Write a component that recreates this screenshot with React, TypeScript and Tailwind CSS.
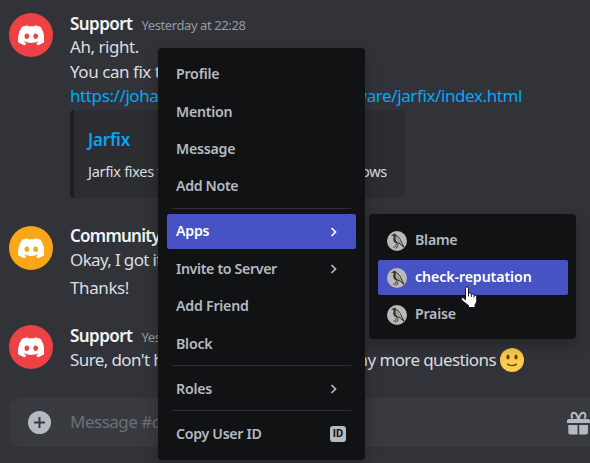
import type { ReactNode } from "react";
import { SiDiscord } from "react-icons/si";

function Avatar({ color }: { color: string }) {
  return (
    <div className={`flex size-11 shrink-0 items-center justify-center rounded-full text-white ${color}`}>
      <SiDiscord size={26.500} />
    </div>
  );
}

function Author({ name, tracking, time }: { name: string; tracking: string; time?: string }) {
  return (
    <div className="flex h-6 items-baseline gap-[9px] pt-px">
      <span className={`font-semibold text-[#f2f3f5] ${tracking}`}>{name}</span>
      {time && <span className="text-[13px] tracking-[-0.400px] text-[#949ba4]">{time}</span>}
    </div>
  );
}

function BirdIcon() {
  return (
    <svg viewBox="0 0 20 20" className="size-5 shrink-0">
      <circle cx="10" cy="10" r="10" fill="#bab9b7" />
      <path d="M3.800 4.600 6 3.500C7.200 2.200 9 2.700 9.300 4.300c2.400 1.200 4.300 3.500 5.300 6.200l3 5.800-.8.400-4.200-3.800C9 13.200 6.500 11.700 6.200 8.800c-.1-1.500.6-2.300.3-3.700z" fill="#34342f" />
      <path d="M8.900 4.900c3 1.200 4.700 3.800 5.200 6.800l1.800 2.800-3.500-2.600C9.300 11.600 7.800 8.500 8.900 4.900z" fill="#b5b4a8" />
      <path d="M10 6.800c.4 2 1.400 3.600 3.200 4.900" stroke="#66665c" strokeWidth=".7" fill="none" />
      <path d="M9.500 12.600 8.600 15.600l-2.400.8M11 13.300l-.6 3-2 1" stroke="#393934" strokeWidth=".9" fill="none" />
    </svg>
  );
}

function Chevron() {
  return (
    <svg viewBox="0 0 8 12" className="mr-[18px] h-3 w-2" fill="none" stroke="currentColor" strokeWidth="1.700">
      <path d="m1.500 2 4 4-4 4" />
    </svg>
  );
}

function Item({ children, tracking = "tracking-[-0.240px]", active, end, icon }: {
  children: string; tracking?: string; active?: boolean; end?: ReactNode; icon?: ReactNode;
}) {
  return (
    <div className={`flex h-[35px] shrink-0 items-center rounded-[2px] pl-[9px] text-[14.2px] leading-5 ${active ? "bg-[#4752c4] text-white" : "text-[#b5bac1]"} ${icon ? "gap-2" : ""}`}>
      {icon}
      <span className={`grow pb-[0.500px] font-semibold whitespace-nowrap ${tracking}`}>{children}</span>
      {end}
    </div>
  );
}

function Divider() {
  return <div className="mx-[5px] h-px shrink-0 bg-[#2e2f34]" />;
}

function SmileEmoji() {
  return (
    <svg viewBox="0 0 24 24" className="ml-1 size-6">
      <circle cx="12" cy="12" r="12" fill="#ffcc4d" />
      <ellipse cx="8" cy="9" rx="1.700" ry="2.500" fill="#664500" />
      <ellipse cx="16" cy="9" rx="1.700" ry="2.500" fill="#664500" />
      <path d="M7.500 16.200q4.500 2.900 9 0" stroke="#664500" strokeWidth="1.400" strokeLinecap="round" fill="none" />
    </svg>
  );
}

function GiftIcon() {
  return (
    <svg viewBox="0 0 23 24" className="h-6 w-[23px]" fill="#b5bac1">
      <path d="M0 9.800Q0 8 1.800 8h19.400q1.800 0 1.800 1.800V12H0zM1.300 14H10.500v9.500H3.300q-2 0-2-2zM12.200 14H21v7.500q0 2-2 2h-6.800z" />
      <path d="M11 8C10.500 4 9.500 1.800 7 1.700 4.200 1.700 4 5 5.500 7.500M12 8c.5-4 1.500-6.200 4-6.300C18.800 1.700 19 5 17.500 7.500" stroke="#b5bac1" strokeWidth="2" fill="none" />
    </svg>
  );
}

export default function App() {
  return (
    <div className="relative h-[463px] w-[590px] overflow-hidden bg-[#313338] font-['Noto_Sans',sans-serif] text-[17px] leading-6 whitespace-nowrap text-[#dbdee1]">
      <main className="flex h-full flex-col pl-[9px]">
        <article className="flex gap-[17px] pt-[13px]">
          <Avatar color="bg-[#ed4245]" />
          <div className="-mt-[2px]">
            <Author name="Support" tracking="tracking-[-0.550px]" time="Yesterday at 22:28" />
            <p className="h-[25px] tracking-[-0.450px]">Ah, right.</p>
            <p className="h-6 tracking-[-0.450px]">You can fix this</p>
            <p className="flex h-[26px] w-[452px] justify-between tracking-[-0.400px] text-[#00a8fc]">
              <span>https://johann.loeff</span>
              <span>software/jarfix/index.html</span>
            </p>
            <section className="h-[88px] w-[335px] rounded-[4px] border-l-4 border-[#1e1f22] bg-[#2b2d31] pt-[18px] pr-[18px] pl-[14px]">
              <h2 className="font-semibold tracking-[-0.200px] text-[#00a8fc]">Jarfix</h2>
              <p className="mt-[7px] flex justify-between text-[14.500px] tracking-[-0.300px]">
                <span>Jarfix fixes the .jar</span>
                <span>on Windows</span>
              </p>
            </section>
          </div>
        </article>
        <article className="mt-7 flex gap-[17px]">
          <Avatar color="bg-[#faa61a]" />
          <div className="-mt-[3px]">
            <Author name="Community" tracking="tracking-[-0.750px]" />
            <p className="mt-px h-[28px] tracking-[-0.650px]">Okay, I got it!</p>
            <p className="h-[23px] tracking-[-0.400px]">Thanks!</p>
          </div>
        </article>
        <article className="mt-[26px] flex gap-[17px]">
          <Avatar color="bg-[#ed4245]" />
          <div className="-mt-[2px]">
            <Author name="Support" tracking="tracking-[-0.550px]" time="Yesterday at 22:31" />
            <div className="mt-px flex h-6 items-center">
              <p className="flex w-[426px] justify-between tracking-[-0.600px]">
                <span>Sure, don't hesitate</span>
                <span>if you have any more questions</span>
              </p>
              <SmileEmoji />
            </div>
          </div>
        </article>
        <footer className="mt-auto mb-4 flex h-[49px] shrink-0 items-center rounded-l-[9px] bg-[#383a40] pl-[19px]">
          <svg viewBox="0 0 24 24" className="size-6">
            <circle cx="11.500" cy="11.500" r="11.500" fill="#b5bac1" />
            <path d="M11.500 6v11M6 11.500h11" stroke="#383a40" strokeWidth="2" />
          </svg>
          <span className="ml-[18px] grow pb-px tracking-[-0.500px] text-[#6d6f78]">Message #discussion</span>
          <GiftIcon />
        </footer>
      </main>

      <nav className="absolute top-12 left-[158px] flex h-[412px] w-[207px] flex-col rounded-[4px] bg-[#111214] px-[9px] pt-[9px] shadow-[0_8px_16px_rgba(0,0,0,0.24)]">
        <div className="flex flex-col gap-[2.400px]">
          <Item>Profile</Item>
          <Item>Mention</Item>
          <Item>Message</Item>
          <Item tracking="tracking-[-0.350px]">Add Note</Item>
        </div>
        <div className="mt-1 mb-[5px]"><Divider /></div>
        <div className="flex flex-col gap-[2.400px]">
          <Item active end={<Chevron />}>Apps</Item>
          <Item tracking="tracking-[-0.350px]" end={<Chevron />}>Invite to Server</Item>
          <Item tracking="tracking-[-0.240px]">Add Friend</Item>
          <Item>Block</Item>
        </div>
        <div className="mt-1 mb-[5px]"><Divider /></div>
        <Item end={<Chevron />}>Roles</Item>
        <div className="mt-1 mb-[5px]"><Divider /></div>
        <Item tracking="tracking-[-0.300px]" end={<span className="mr-[10px] flex size-4 items-center justify-center rounded-[3px] bg-[#b5bac1] font-['Roboto',sans-serif] text-[11px] font-bold text-[#111214]">ID</span>}>Copy User ID</Item>
      </nav>

      <nav className="absolute top-[214px] left-[369px] flex h-[125px] w-[207px] flex-col gap-[2px] rounded-[4px] bg-[#111214] pt-[9px] pr-2 pl-[9px] shadow-[0_8px_16px_rgba(0,0,0,0.24)]">
        <Item icon={<BirdIcon />}>Blame</Item>
        <Item active tracking="tracking-[-0.100px]" icon={<BirdIcon />}>check-reputation</Item>
        <Item icon={<BirdIcon />}>Praise</Item>
      </nav>

      <svg viewBox="0 0 18 24" className="absolute top-[286px] left-[460px] h-6 w-[18px]">
        <path d="M5.500 2.500q0-1.700 1.500-1.700t1.500 1.700v4.500q2.300-.8 2.800 1 2.200-.8 2.700 1 2.500-.5 2.700 1.500v4q0 2.500-1.700 4.200v2.800H8.500v-2L2 14.500q-1.500-2 .2-2.800 1.300-.3 3.300 2z" fill="#fff" stroke="#151728" strokeWidth="1" />
        <path d="M8.500 6.500v4M11.300 8v3M14 9v2.500" stroke="#151728" />
      </svg>
    </div>
  );
}
